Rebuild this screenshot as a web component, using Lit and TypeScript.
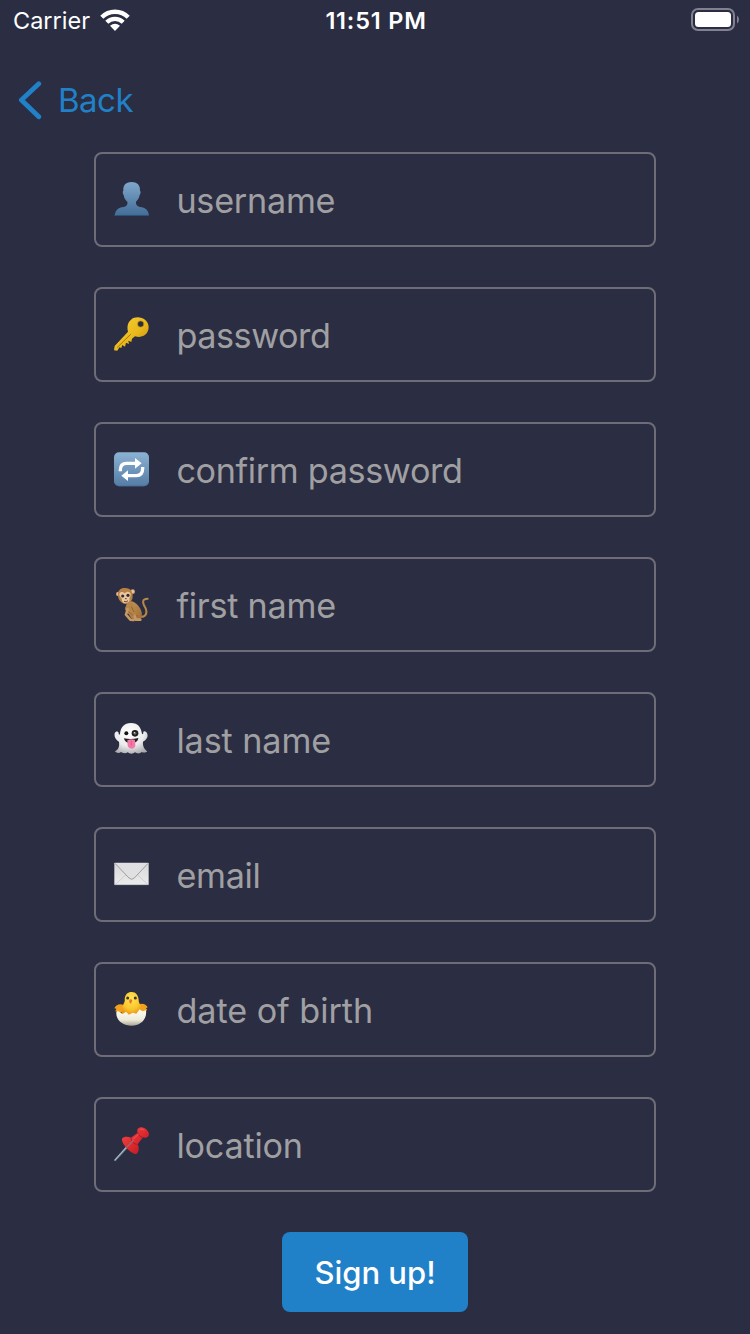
import { LitElement, html, css, svg } from "lit";
import { customElement } from "lit/decorators.js";

// All field icons are drawn on a 150-unit grid and shown at 50px.
const person = svg`
  <defs><linearGradient id="g" x1="0" y1="0" x2="0" y2="1"><stop offset="0" stop-color="#7fa9cb"/><stop offset="1" stop-color="#426b96"/></linearGradient></defs>
  <path fill="url(#g)" d="M77 21C92 21 103 29 102 47C105 49 104 57 101 60C99 71 94 76 90 80C89 88 92 93 102 96C118 98 128 105 129 123H26C27 105 37 98 53 96C63 93 66 88 64 80C59 76 54 70 53 60C50 57 49 49 52 47C51 29 61 21 77 21Z"/>
  <path fill="#2d5276" d="M26 120H129V123H26Z"/>`;

const key = svg`
  <defs><linearGradient id="g" x1="0" y1="0" x2="1" y2="1"><stop offset="0" stop-color="#f7d13b"/><stop offset=".55" stop-color="#e9b91c"/><stop offset="1" stop-color="#bd8306"/></linearGradient></defs>
  <path fill="url(#g)" fill-rule="evenodd" d="M75 29C86 19 106 20 118 30C130 41 131 58 122 70C112 82 99 82 87 79L78 86L76 96L67 92L69 102L60 98L57 110L49 105L46 114L40 112L34 122L24 121L26 108L66 65C63 52 64 38 75 29ZM104 33A9 9 0 1 0 104 51A9 9 0 1 0 104 33Z"/>
  <path fill="none" stroke="#a97508" stroke-width="3" d="M33 113L74 73"/>
  <circle cx="104" cy="42" r="9.5" fill="none" stroke="#c18c0e" stroke-width="2"/>`;

const repeat = svg`
  <defs><linearGradient id="g" x1="0" y1="0" x2="0" y2="1"><stop offset="0" stop-color="#8cb2d3"/><stop offset="1" stop-color="#547ca5"/></linearGradient></defs>
  <rect x="24" y="22" width="105" height="102" rx="15" fill="url(#g)"/>
  <path fill="none" stroke="#416486" stroke-width="2" opacity=".7" d="M26 114Q29 123 39 123H114Q124 123 127 114"/>
  <g fill="none" stroke="#fff" stroke-width="10"><path d="M43 79V75Q43 55 62 55H89"/><path d="M110 66V70Q110 92 91 92H64"/></g>
  <path fill="#fff" d="M87 39L107 55L87 71ZM66 76L46 92L66 108Z"/>`;

const monkey = svg`
  <defs><linearGradient id="g" x1="0" y1="0" x2="1" y2="1"><stop offset="0" stop-color="#c99a5e"/><stop offset="1" stop-color="#9d6d33"/></linearGradient></defs>
  <path fill="none" stroke="#b58749" stroke-width="6" stroke-linecap="round" d="M102 110C121 113 125 97 118 83C109 68 107 56 125 56"/>
  <path fill="url(#g)" d="M64 66C76 60 90 67 98 79C107 91 112 105 103 116C96 123 83 119 75 113L58 84Z"/>
  <path fill="none" stroke="#b58449" stroke-width="12" stroke-linecap="round" stroke-linejoin="round" d="M69 76L63 87L86 107M76 73L80 90L71 97"/>
  <path fill="none" stroke="#87551f" stroke-width="2" d="M76 80L84 96M66 94L82 107L96 108"/>
  <path fill="none" stroke="#c69865" stroke-width="8" stroke-linecap="round" stroke-linejoin="round" d="M65 88L60 104L73 119L82 120M86 108L89 119H103"/>
  <circle cx="37" cy="42" r="7" fill="#d6a07b"/><circle cx="80" cy="35" r="7" fill="#d6a07b"/>
  <circle cx="37" cy="42" r="4" fill="#edc7ad"/><circle cx="80" cy="35" r="4" fill="#edc7ad"/>
  <path fill="#b78145" d="M36 48C34 30 45 23 58 24C74 24 81 36 80 49C80 64 70 72 58 72C48 71 38 62 36 48Z"/>
  <path fill="#e9c5a0" d="M41 47C37 38 48 31 56 40C63 31 76 35 74 46C72 53 69 54 71 61C68 71 51 73 48 62C49 55 44 54 41 47Z"/>
  <circle cx="50" cy="48" r="4.7" fill="#342b2b"/><circle cx="66" cy="46" r="4.7" fill="#342b2b"/>
  <path fill="none" stroke="#67432f" stroke-width="3" d="M57 56H62M54 64Q61 68 66 62"/>`;

const ghost = svg`
  <defs><radialGradient id="g" cx=".45" cy=".3" r=".75"><stop offset="0" stop-color="#fff"/><stop offset=".6" stop-color="#ebebed"/><stop offset="1" stop-color="#a9a9ae"/></radialGradient></defs>
  <path fill="url(#g)" d="M75 24C97 24 105 38 108 56C111 60 112 55 112 50C115 46 123 50 124 57C127 65 121 76 111 80C110 92 113 101 124 109C119 114 112 113 107 111C101 117 93 116 87 112C80 118 71 117 65 112C59 116 50 115 45 111C39 115 32 115 27 109C38 103 41 94 39 80C29 75 24 65 26 55C29 47 38 49 38 55C38 60 40 60 42 56C44 37 54 24 75 24Z"/>
  <circle cx="61" cy="55" r="6" fill="#151515"/><circle cx="87" cy="55" r="10" fill="#202020"/><circle cx="87" cy="55" r="4" fill="#686868"/><circle cx="85" cy="53" r="2" fill="#eee"/>
  <path fill="#252122" d="M54 70Q75 74 97 69C96 81 86 84 75 84C64 84 56 81 54 70Z"/>
  <path fill="#f279a7" d="M64 76Q76 70 87 75L88 91C88 104 67 105 65 91Z"/>
  <path fill="none" stroke="#d84e86" stroke-width="2" d="M76 77V92"/>`;

const mail = svg`
  <defs><linearGradient id="g" x1="0" y1="0" x2="0" y2="1"><stop offset="0" stop-color="#d8d8da"/><stop offset="1" stop-color="#ececec"/></linearGradient></defs>
  <rect x="25" y="38" width="103" height="67" rx="2" fill="url(#g)"/>
  <path fill="none" stroke="#c2c2c4" stroke-width="2" d="M28 103L60 74M125 103L94 74"/>
  <path fill="#e0e0e2" d="M27 39H126L85 85Q77 93 69 85Z"/>
  <path fill="none" stroke="#9f9fa2" stroke-width="3" d="M27 40L69 84Q77 92 85 84L126 40"/>
  <path fill="none" stroke="#aaaab0" stroke-width="2" d="M26 104H127"/>`;

const chick = svg`
  <defs><radialGradient id="g" cx=".5" cy=".3" r=".7"><stop offset="0" stop-color="#ffe558"/><stop offset=".65" stop-color="#fac52c"/><stop offset="1" stop-color="#e99418"/></radialGradient>
  <linearGradient id="s" x1="0" y1="0" x2="0" y2="1"><stop offset="0" stop-color="#fffef5"/><stop offset=".65" stop-color="#eeeada"/><stop offset="1" stop-color="#aaa691"/></linearGradient></defs>
  <path fill="#f1a11d" d="M54 61C43 55 31 58 25 70L31 71L28 79L40 84L59 78ZM97 59C109 52 121 58 125 67L120 70L124 75L109 84L93 78Z"/>
  <path fill="url(#g)" d="M56 41C58 27 66 21 76 21C89 20 97 31 98 44C97 52 103 56 105 66L102 90H47L49 66C51 56 58 52 56 41Z"/>
  <path fill="url(#s)" d="M31 82L36 78L50 87L60 80L69 89L80 83L91 86L101 73L109 79L120 76C124 103 103 122 77 122C51 122 29 106 31 82Z"/>
  <circle cx="65" cy="39" r="4.5" fill="#3e3a1c"/><circle cx="88" cy="39" r="4.5" fill="#3e3a1c"/>
  <path fill="#ed7620" d="M72 43Q77 41 79 46L75 57Q69 53 69 48Z"/>`;

const pin = svg`
  <defs><linearGradient id="g" x1="0" y1="0" x2="1" y2="1"><stop offset="0" stop-color="#f54b48"/><stop offset=".55" stop-color="#db282d"/><stop offset="1" stop-color="#a91522"/></linearGradient></defs>
  <path stroke="#758b9c" stroke-width="6" d="M26 122L66 78"/><path stroke="#bdcbd2" stroke-width="2.5" d="M26 121L65 77"/>
  <path fill="url(#g)" d="M48 56C53 49 66 49 75 53L95 38C91 28 98 21 108 22C120 24 132 37 128 47C124 54 116 54 111 52L95 73C101 86 98 98 91 102C79 103 46 75 48 56Z"/>
  <path fill="none" stroke="#a81f29" stroke-width="3" d="M75 54C77 66 84 73 95 73M96 39C98 46 103 52 111 52"/>
  <path stroke="#9e6670" stroke-width="4" d="M62 82L83 61"/>
  <path fill="none" stroke="#ff8580" stroke-width="2" opacity=".7" d="M80 58L98 43M103 28Q109 25 115 31"/>`;

const fields = [
  { label: "username", icon: person, tracking: -0.25 },
  { label: "password", icon: key, tracking: -0.45 },
  { label: "confirm password", icon: repeat, tracking: -0.35 },
  { label: "first name", icon: monkey, tracking: -0.25 },
  { label: "last name", icon: ghost, tracking: -0.1 },
  { label: "email", icon: mail, tracking: -0.3 },
  { label: "date of birth", icon: chick, tracking: -0.05 },
  { label: "location", icon: pin, tracking: -0.2 },
];

// Each row keeps its own shadow root so gradient ids stay local.
@customElement("form-field")
class FormField extends LitElement {
  static properties = { label: {}, icon: { attribute: false }, tracking: { type: Number } };
  declare label: string;
  declare icon: unknown;
  declare tracking: number;

  static styles = css`
    :host { display: block; }
    .field {
      box-sizing: border-box;
      display: flex;
      align-items: center;
      height: 95px;
      padding-left: 10px;
      border: 2px solid #6e6d77;
      border-radius: 8px;
    }
    .icon { width: 50px; height: 50px; flex: none; display: block; }
    .label {
      margin-left: 20.4px;
      padding-top: 3px;
      font: 400 34.2px/44px Inter, sans-serif;
      color: #a0a0a2;
      white-space: nowrap;
    }
  `;

  render() {
    return html`<div class="field">
      <svg class="icon" viewBox="0 0 150 150">${this.icon}</svg>
      <span class="label" style="letter-spacing: ${this.tracking}px">${this.label}</span>
    </div>`;
  }
}

@customElement("app-root")
class AppRoot extends LitElement {
  static styles = css`
    :host {
      display: block;
      height: 1334px;
      overflow: hidden;
      background: #2b2d42;
      font-family: Inter, sans-serif;
      color: #fff;
    }
    .status {
      height: 40px;
      display: grid;
      grid-template-columns: 1fr auto 1fr;
      align-items: center;
      box-sizing: border-box;
      padding: 0 11px 0 13px;
    }
    .carrier { display: flex; align-items: center; gap: 10px; font-size: 23.5px; line-height: 38px; }
    .name { padding-top: 2px; }
    .time { font-size: 23.5px; font-weight: 600; line-height: 38px; padding-top: 2px; letter-spacing: 0.8px; }
    .battery { justify-self: end; display: block; }
    .nav {
      height: 112px;
      box-sizing: border-box;
      padding: 38px 0 0 17px;
      display: flex;
      align-items: flex-start;
      color: #2080c8;
    }
    .chevron { display: block; margin-top: 2px; }
    .back { font-size: 33px; line-height: 44px; margin-left: 15px; letter-spacing: -0.5px; }
    .form { width: 562px; margin: 0 auto; display: flex; flex-direction: column; gap: 40px; }
    .submit {
      align-self: center;
      width: 186px;
      height: 80px;
      border: 0;
      padding: 1px 0 0;
      border-radius: 8px;
      background: #2080c8;
      color: #fff;
      font: 500 31px/40px Inter, sans-serif;
      white-space: nowrap;
    }
  `;

  render() {
    return html`
      <div class="status">
        <div class="carrier">
          <span class="name">Carrier</span>
          <svg width="30" height="22" viewBox="0 0 30 22">
            <g fill="none" stroke="#fff" stroke-width="4.3">
              <path d="M1.8 8.2C9 .9 21 .9 28.2 8.2"/>
              <path d="M6.8 13.3C11.4 8.8 18.6 8.8 23.2 13.3"/>
            </g>
            <path fill="#fff" d="M10 16.7Q15 12.9 20 16.7L15 22Z"/>
          </svg>
        </div>
        <span class="time">11:51 PM</span>
        <svg class="battery" width="48" height="24" viewBox="0 0 48 24">
          <rect x="1" y="1" width="42" height="21" rx="6" fill="none" stroke="#818190" stroke-width="2"/>
          <rect x="4" y="4" width="36" height="15" rx="3.5" fill="#fff"/>
          <path fill="#818190" d="M46 7.5Q48 9 48 11.5Q48 14 46 15.5Z"/>
        </svg>
      </div>
      <div class="nav">
        <svg class="chevron" width="26" height="40" viewBox="0 0 26 40">
          <path d="M21.8 3.8L4.4 20L21.8 36.8" fill="none" stroke="#2080c8" stroke-width="4.8" stroke-linecap="round" stroke-linejoin="round"/>
        </svg>
        <span class="back">Back</span>
      </div>
      <div class="form">
        ${fields.map((f) => html`<form-field .label=${f.label} .icon=${f.icon} .tracking=${f.tracking}></form-field>`)}
        <button class="submit">Sign up!</button>
      </div>
    `;
  }
}
